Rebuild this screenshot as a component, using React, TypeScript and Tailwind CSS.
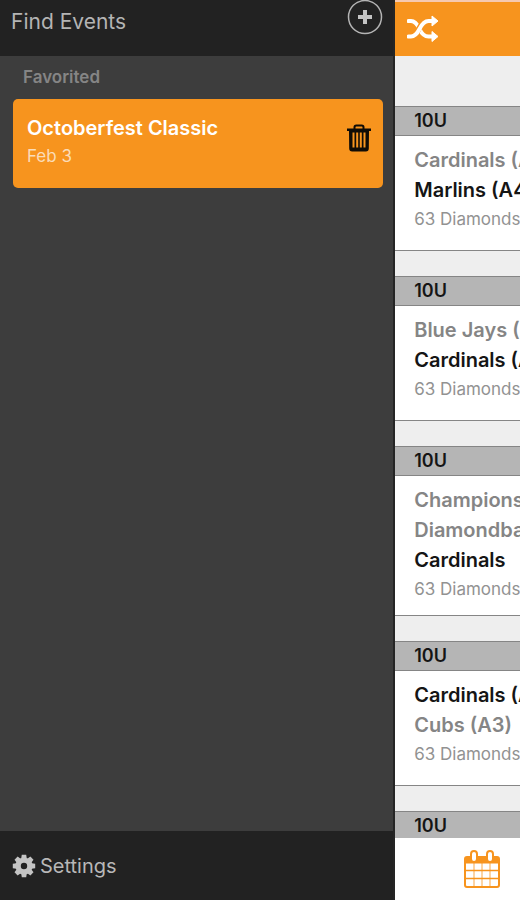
type Team = { name: string; winner?: boolean }
type Game = { id: number; division: string; teams: Team[]; venue: string }

const games: Game[] = [
  {
    id: 1,
    division: "10U",
    teams: [{ name: "Cardinals (A2)" }, { name: "Marlins (A4)", winner: true }],
    venue: "63 Diamonds",
  },
  {
    id: 2,
    division: "10U",
    teams: [
      { name: "Blue Jays (A1)" },
      { name: "Cardinals (A2)", winner: true },
    ],
    venue: "63 Diamonds",
  },
  {
    id: 3,
    division: "10U",
    teams: [
      { name: "Champions" },
      { name: "Diamondbacks" },
      { name: "Cardinals", winner: true },
    ],
    venue: "63 Diamonds",
  },
  {
    id: 4,
    division: "10U",
    teams: [{ name: "Cardinals (A2)", winner: true }, { name: "Cubs (A3)" }],
    venue: "63 Diamonds",
  },
  { id: 5, division: "10U", teams: [], venue: "" },
]

function PlusCircleIcon() {
  return (
    <svg viewBox="0 0 36 36" className="h-9 w-9" fill="none" aria-hidden="true">
      <circle cx="18" cy="17" r="16.5" stroke="#b4b4b4" strokeWidth="1.5" />
      <path d="M18 10v14M11 17h14" stroke="#c4c4c4" strokeWidth="4" />
    </svg>
  )
}

function TrashIcon() {
  return (
    <svg viewBox="0 0 24 28" className="h-7 w-6" fill="none" aria-hidden="true">
      <path
        d="M7.500 5V3.200Q7.500 1.500 9.200 1.500H14.800Q16.500 1.500 16.500 3.200V5"
        stroke="#100c06"
        strokeWidth="2"
      />
      <path
        fill="#100c06"
        fillRule="evenodd"
        d="M0 4.500H24V7H22L21.800 24.500Q21.800 27.500 18.800 27.500H5.200Q2.200 27.500 2.200 24.500L2 7H0ZM5.500 8.500V23.500H7.500V8.500ZM9.200 8.500V23.500H11.200V8.500ZM12.800 8.500V23.500H14.800V8.500ZM16.500 8.500V23.500H18.500V8.500Z"
      />
    </svg>
  )
}

function GearIcon() {
  return (
    <svg viewBox="-12 -12 24 24" className="h-6 w-6" aria-hidden="true">
      <circle r="5.900" fill="none" stroke="#c4c4c4" strokeWidth="5.400" />
      {[0, 45, 90, 135, 180, 225, 270, 315].map((angle) => (
        <path
          key={angle}
          d="M-2.800 -7.500L-2.200 -11.200H2.200L2.800 -7.500Z"
          fill="#c4c4c4"
          transform={`rotate(${angle})`}
        />
      ))}
    </svg>
  )
}

function ShuffleIcon() {
  return (
    <svg viewBox="0 0 32 28" className="h-7 w-8" fill="none" aria-hidden="true">
      <path
        d="M1.500 6H4C8 6 10 8.500 12.500 14S17.500 21.500 21.500 21.500H25"
        stroke="#fff"
        strokeWidth="4"
        strokeLinecap="round"
      />
      <path
        d="M9 18.500C12.500 14.500 13.500 6 21.500 6"
        stroke="#f7941e"
        strokeWidth="5.500"
      />
      <path
        d="M1.500 21.500H4C8 21.500 10 19 12.500 14S17.500 6 21.500 6H25"
        stroke="#fff"
        strokeWidth="4"
        strokeLinecap="round"
      />
      <path
        d="M25 1L31 6L25 11ZM25 16.500L31 21.500L25 26.500Z"
        fill="#fff"
        stroke="#fff"
        strokeLinejoin="round"
      />
    </svg>
  )
}

function CalendarIcon() {
  return (
    <svg viewBox="0 0 36 38" className="h-[38px] w-9" fill="none" aria-hidden="true">
      <rect x="1" y="7" width="34" height="30" rx="2" fill="#fff" stroke="#f7941e" strokeWidth="2" />
      <path d="M1 7H35V13.500H1Z" fill="#f7941e" />
      <path d="M10 13V37M18 13V37M26 13V37" stroke="#f7941e" strokeOpacity="0.800" />
      <path d="M1 20.500H35M1 28.500H35" stroke="#f7941e" strokeWidth="1.500" />
      <rect x="7" y="1" width="6" height="11" rx="3" fill="#fff" stroke="#f7941e" strokeWidth="2" />
      <rect x="23" y="1" width="6" height="11" rx="3" fill="#fff" stroke="#f7941e" strokeWidth="2" />
    </svg>
  )
}

function Drawer() {
  return (
    <aside className="flex min-w-0 flex-1 flex-col border-r-2 border-[#252525] bg-[#3d3d3d]">
      <header className="flex h-14 items-start justify-between bg-[#222] pr-2.5 pl-[11px] text-[#b4b4b4]">
        <h1 className="pt-[7px] text-[21px] leading-[30px]">Find Events</h1>
        <button type="button" aria-label="Add event">
          <PlusCircleIcon />
        </button>
      </header>
      <main className="flex-1 pr-2.5 pl-[13px]">
        <h2 className="px-2.5 pt-[11px] pb-3 text-[17px] leading-5 font-semibold text-[#858585]">
          Favorited
        </h2>
        <div className="flex h-[89px] items-start justify-between rounded-[5px] bg-[#f7941e] pr-3 pl-3.5">
          <a href="#octoberfest" className="pt-[15px]">
            <div className="text-xl leading-7 font-semibold text-white">
              Octoberfest Classic
            </div>
            <div className="text-[17px] leading-7 text-[#fbdcb8]">Feb 3</div>
          </a>
          <button type="button" aria-label="Remove favorite" className="pt-[25px]">
            <TrashIcon />
          </button>
        </div>
      </main>
      <footer className="h-[69px] bg-[#222] pl-3 text-[#b8b8b8]">
        <button type="button" className="flex h-[69px] items-center gap-1 text-xl">
          <GearIcon />
          Settings
        </button>
      </footer>
    </aside>
  )
}

function GameCard({ game }: { game: Game }) {
  return (
    <section className="mb-[25px] whitespace-nowrap">
      <h2 className="h-[30px] border-y border-[#858585] bg-[#b5b5b5] pl-[19px] text-lg leading-7 font-semibold text-[#151515]">
        {game.division}
      </h2>
      {game.teams.length > 0 && (
        <div className="min-h-[115px] border-b border-[#858585] bg-white pt-[9px] pb-3 pl-[19px]">
          {game.teams.map((team) => (
            <div
              key={team.name}
              className={
                team.winner
                  ? "text-xl leading-[30px] font-semibold text-[#151515]"
                  : "text-xl leading-[30px] font-semibold text-[#858585]"
              }
            >
              {team.name}
            </div>
          ))}
          <div className="text-[17px] leading-7 text-[#929292]">{game.venue}</div>
        </div>
      )}
    </section>
  )
}

function Schedule() {
  return (
    <div className="flex w-[24%] flex-col overflow-hidden bg-[#eee]">
      <header className="flex h-14 shrink-0 items-center border-t-2 border-[#f6c9b0] bg-[#f7941e] pl-3">
        <button type="button" aria-label="Shuffle">
          <ShuffleIcon />
        </button>
      </header>
      <div className="min-h-0 flex-1 overflow-hidden pt-[50px]">
        {games.map((game) => (
          <GameCard key={game.id} game={game} />
        ))}
      </div>
      <nav className="flex h-[62px] shrink-0 items-center bg-white pl-[69px]">
        <button type="button" aria-label="Calendar">
          <CalendarIcon />
        </button>
      </nav>
    </div>
  )
}

export default function App() {
  return (
    <div className="flex h-screen overflow-hidden font-['Inter','Liberation_Sans',sans-serif]">
      <Drawer />
      <Schedule />
    </div>
  )
}
